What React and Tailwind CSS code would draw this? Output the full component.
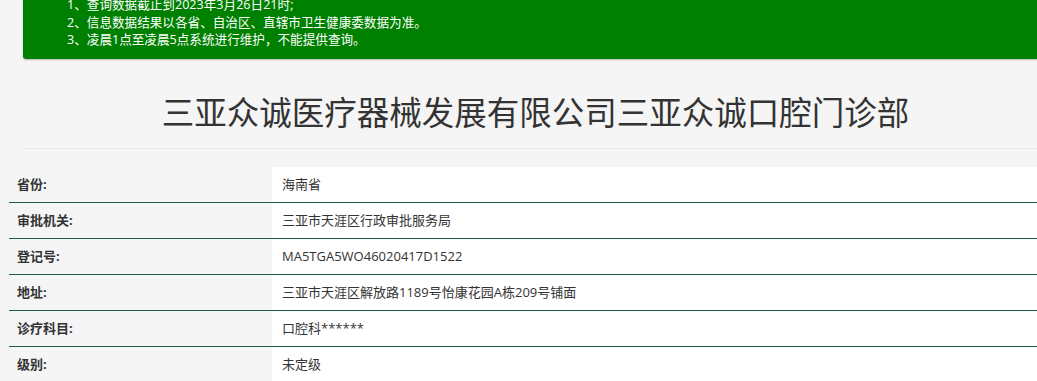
const notices = [
  "1、查询数据截止到2023年3月26日21时;",
  "2、信息数据结果以各省、自治区、直辖市卫生健康委数据为准。",
  "3、凌晨1点至凌晨5点系统进行维护，不能提供查询。",
];

const rows = [
  { label: "省份:", value: "海南省" },
  { label: "审批机关:", value: "三亚市天涯区行政审批服务局" },
  { label: "登记号:", value: "MA5TGA5WO46020417D1522" },
  { label: "地址:", value: "三亚市天涯区解放路1189号怡康花园A栋209号铺面" },
  { label: "诊疗科目:", value: "口腔科******" },
  { label: "级别:", value: "未定级" },
];

const App = () => {
  return (
    <div
      className="w-[1037px] h-[381px] overflow-hidden bg-[#f5f5f5] text-[#333]"
      style={{ fontFamily: '"Open Sans", "Noto Sans CJK SC", sans-serif' }}
    >
      <div className="ml-[23px] w-[1040px] -mt-[4px] h-[63px] bg-[#008000] rounded-b-[3px] shadow-[0_1px_2px_rgba(0,0,0,0.25)] pl-[44px] pt-0">
        {notices.map((line) => (
          <div key={line} className="text-[12.6px] leading-[17.5px] text-white">
            {line}
          </div>
        ))}
      </div>

      <div className="ml-[23px] w-[1025px] border-b border-[#ebebeb] pt-[35px] pb-[17px]">
        <h1 className="text-center text-[32.5px] leading-[37px] font-normal text-[#333]">
          三亚众诚医疗器械发展有限公司三亚众诚口腔门诊部
        </h1>
      </div>

      <div className="ml-[9px] mt-[18px]">
        {rows.map((row, i) => (
          <div
            key={row.label}
            className={
              "flex h-[36px] " +
              (i < rows.length - 1 ? "border-b border-[#1f5a45]" : "")
            }
          >
            <div className="w-[263px] pl-[8px] flex items-center text-[13px] font-bold">
              {row.label}
            </div>
            <div className="flex-1 bg-white pl-[10px] flex items-center text-[13px]">
              {row.value}
            </div>
          </div>
        ))}
      </div>
    </div>
  );
};

export default App;
